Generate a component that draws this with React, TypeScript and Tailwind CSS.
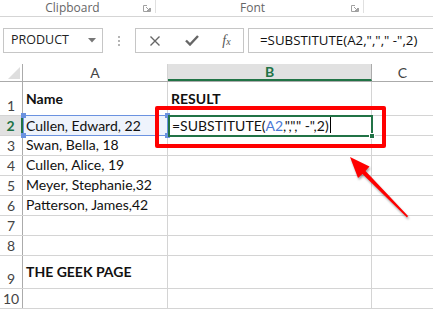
import React from "react"

// Row layout of the sheet: height in px for each row
const rows = [
  { n: 1, h: 34, a: "Name", b: "RESULT", bold: true },
  { n: 2, h: 20, a: "", b: "" },
  { n: 3, h: 20, a: "Swan, Bella, 18", b: "" },
  { n: 4, h: 20, a: "Cullen, Alice, 19", b: "" },
  { n: 5, h: 20, a: "Meyer, Stephanie,32", b: "" },
  { n: 6, h: 20, a: "Patterson, James,42", b: "" },
  { n: 7, h: 20, a: "", b: "" },
  { n: 8, h: 20, a: "", b: "" },
  { n: 9, h: 33, a: "THE GEEK PAGE", b: "", bold: true },
  { n: 10, h: 20, a: "", b: "" },
]

const cellFont = "font-['Lato',sans-serif]"
const uiFont = "font-['Open_Sans',sans-serif]"

function Launcher() {
  return (
    <svg width="8" height="7" viewBox="0 0 8 7" className="mt-[5px]">
      <path d="M0.5 0.5 H4 M0.5 0.5 V6.5 H7.5 V3" stroke="#a0a0a0" fill="none" />
      <path d="M3 2 L6.5 5.5 M6.5 3 V5.5 H4" stroke="#a0a0a0" fill="none" />
    </svg>
  )
}

function Ribbon() {
  return (
    <div className={`h-[17px] flex border-b border-[#d5d5d5] text-[12px] text-[#666] ${uiFont}`}>
      <div className="w-[155px] flex items-start">
        <div className="flex-1 text-center leading-[16px] pl-[2px]">Clipboard</div>
        <div className="w-[12px] flex justify-start">
          <Launcher />
        </div>
      </div>
      <div className="w-px h-[13px] bg-[#e0e0e0]" />
      <div className="w-[207px] flex items-start">
        <div className="flex-1 text-center leading-[16px] pr-[2px]">Font</div>
        <div className="w-[12px] flex justify-start">
          <Launcher />
        </div>
      </div>
      <div className="w-px h-[13px] bg-[#e0e0e0]" />
    </div>
  )
}

function FormulaBar() {
  return (
    <div className={`flex items-center h-[25px] mt-[11px] ${uiFont}`}>
      <div className="ml-[3px] w-[100px] h-full border border-[#c6c6c6] flex items-center pl-[7px] pr-[6px]">
        <span className="flex-1 text-[12.5px] text-[#222] leading-none">PRODUCT</span>
        <svg width="8" height="5" viewBox="0 0 8 5">
          <path d="M0 0 H8 L4 4.5 Z" fill="#777" />
        </svg>
      </div>
      <div className="w-[32px] flex flex-col items-center gap-[2px]">
        <span className="w-[2px] h-[2px] bg-[#b5b5b5]" />
        <span className="w-[2px] h-[2px] bg-[#b5b5b5]" />
        <span className="w-[2px] h-[2px] bg-[#b5b5b5]" />
      </div>
      <div className="w-[109px] h-full border border-[#c6c6c6] flex items-center">
        <div className="w-[37px] flex justify-center">
          <svg width="12" height="12" viewBox="0 0 12 12">
            <path d="M1.5 1.5 L10.5 10.5 M10.5 1.5 L1.5 10.5" stroke="#666" strokeWidth="1.4" />
          </svg>
        </div>
        <div className="w-[37px] flex justify-center">
          <svg width="14" height="11" viewBox="0 0 14 11">
            <path d="M1 5.5 L5 9.5 L13 1" stroke="#666" strokeWidth="2.4" fill="none" />
          </svg>
        </div>
        <div className="w-[33px] flex justify-center">
          <span className="font-['Liberation_Serif',serif] italic text-[14px] text-[#555] leading-none">
            f<span className="text-[10px]">x</span>
          </span>
        </div>
      </div>
      <div className="ml-[4px] flex-1 h-full border border-r-0 border-[#c6c6c6] flex items-center pl-[11px]">
        <span className="text-[13.3px] text-[#111] leading-none">=SUBSTITUTE(A2,",","  -",2)</span>
      </div>
    </div>
  )
}

function ColumnHeaders() {
  return (
    <div className={`grid grid-cols-[23px_145px_204px_1fr] h-[18px] border-b border-[#ababab] text-[14px] ${cellFont}`}>
      <div className="border-r border-[#ababab] flex items-end justify-end p-[2px]">
        <svg width="12" height="12" viewBox="0 0 12 12">
          <path d="M12 0 V12 H0 Z" fill="#dedede" />
        </svg>
      </div>
      <div className="border-r border-[#d4d4d4] flex items-center justify-center text-[#444] leading-none">A</div>
      <div className="bg-[#e1e1e1] border-r border-[#ababab] border-b-2 border-b-[#217346] flex items-center justify-center text-[#217346] font-bold leading-none">
        B
      </div>
      <div className="flex items-center justify-center text-[#444] leading-none">C</div>
    </div>
  )
}

function Sheet() {
  return (
    <div className={`relative ${cellFont} text-[14px]`}>
      <ColumnHeaders />
      {rows.map((r) => (
        <div
          key={r.n}
          className="grid grid-cols-[23px_145px_204px_1fr] border-b border-[#d4d4d4]"
          style={{ height: r.h }}
        >
          <div
            className={`flex items-end justify-center pb-[2px] leading-none ${
              r.n === 2
                ? "bg-[#e1e1e1] text-[#217346] font-bold border-r-2 border-r-[#217346]"
                : "text-[#444] border-r border-[#ababab]"
            }`}
          >
            {r.n}
          </div>
          <div
            className={`flex items-end pl-[3px] leading-none border-r border-[#d4d4d4] text-[#111] ${
              r.bold ? "font-bold pb-[9px]" : "pb-[3px]"
            }`}
          >
            {r.a}
          </div>
          <div
            className={`flex items-end pl-[3px] leading-none border-r border-[#d4d4d4] text-[#111] ${
              r.bold ? "font-bold pb-[9px]" : "pb-[3px]"
            }`}
          >
            {r.b}
          </div>
          <div />
        </div>
      ))}

      {/* A2 reference highlight */}
      <div className="absolute left-[23px] top-[51px] w-[145px] h-[21px] border-[1.5px] border-[#6b92e0] bg-[#eef3fc] pointer-events-none">
        <span className="absolute -left-[3px] -top-[3px] w-[5px] h-[5px] bg-[#6b92e0]" />
        <span className="absolute -right-[3px] -top-[3px] w-[5px] h-[5px] bg-[#6b92e0]" />
        <span className="absolute -left-[3px] -bottom-[3px] w-[5px] h-[5px] bg-[#6b92e0]" />
        <span className="absolute -right-[3px] -bottom-[3px] w-[5px] h-[5px] bg-[#6b92e0]" />
        <div className="h-full flex items-end pl-[2px] pb-[2px] leading-none text-[#111]">Cullen, Edward, 22</div>
      </div>

      {/* active cell B2 in edit mode */}
      <div className="absolute left-[168px] top-[51px] w-[205px] h-[22px] border-2 border-[#217346] bg-white flex items-end pl-[2px] pb-[2px] leading-none text-[#111]">
        <span>
          =SUBSTITUTE(<span className="text-[#4a78d6]">A2</span>,&quot;,&quot;,&quot; -&quot;,2)
        </span>
        <span className="w-px h-[16px] bg-black ml-[1px]" />
        <span className="absolute -right-[4px] -bottom-[4px] w-[6px] h-[6px] bg-[#217346] border border-white" />
      </div>

      {/* red callout box */}
      <div className="absolute left-[155px] top-[42px] w-[231px] h-[42px] border-4 border-[#ff0000] rounded-[2px] pointer-events-none" />
    </div>
  )
}

function Arrow() {
  return (
    <svg
      className="absolute left-0 top-0 pointer-events-none drop-shadow-[1px_2px_1px_rgba(0,0,0,0.35)]"
      width="433"
      height="309"
      viewBox="0 0 433 309"
    >
      <polygon
        points="350,157 358,178 362.5,174 407,217.5 408,216 365.5,171 369.5,166.5"
        fill="#ff0000"
      />
    </svg>
  )
}

export default function App() {
  return (
    <div className="relative w-[433px] h-[309px] overflow-hidden bg-white">
      <Ribbon />
      <FormulaBar />
      <div className="h-[11px]" />
      <Sheet />
      <Arrow />
    </div>
  )
}
